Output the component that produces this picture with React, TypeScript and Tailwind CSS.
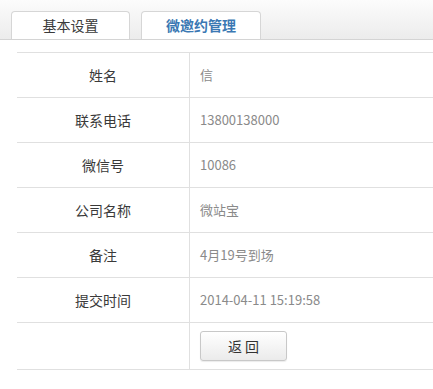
import React from 'react';

const rows: { label: string; value: string }[] = [
  { label: '姓名', value: '信' },
  { label: '联系电话', value: '13800138000' },
  { label: '微信号', value: '10086' },
  { label: '公司名称', value: '微站宝' },
  { label: '备注', value: '4月19号到场' },
  { label: '提交时间', value: '2014-04-11 15:19:58' },
];

const App: React.FC = () => {
  return (
    <div
      className="w-[433px] h-[389px] bg-white overflow-hidden"
      style={{ fontFamily: '"Noto Sans CJK SC", "Noto Sans", sans-serif' }}
    >
      <div className="h-[40px] flex items-end gap-[11px] pl-[11px] border-b border-[#d4d4d4] bg-gradient-to-b from-[#fcfcfc] to-[#ececec]">
        <div className="w-[119px] h-[28px] flex items-center justify-center bg-white border border-b-0 border-[#d6d6d6] rounded-t-[4px] text-[14px] text-[#3a3a3a]">
          基本设置
        </div>
        <div className="w-[120px] h-[28px] flex items-center justify-center bg-white border border-b-0 border-[#d6d6d6] rounded-t-[4px] text-[14px] font-bold text-[#3b78b3]">
          微邀约管理
        </div>
      </div>

      <div className="pt-[12px] pl-[17px]">
        <div className="border-t border-[#e0e0e0]">
          {rows.map((r) => (
            <div key={r.label} className="flex h-[45px] border-b border-[#e0e0e0]">
              <div className="w-[173px] shrink-0 border-r border-[#e0e0e0] flex items-center justify-center text-[14px] text-[#3a3a3a]">
                {r.label}
              </div>
              <div className="flex items-center pl-[10px] text-[13px] text-[#8a8a8a]">{r.value}</div>
            </div>
          ))}
          <div className="flex h-[47px] border-b border-[#e0e0e0]">
            <div className="w-[173px] shrink-0 border-r border-[#e0e0e0]" />
            <div className="flex items-center pl-[10px]">
              <button className="w-[87px] h-[30px] rounded-[3px] border border-[#c8c8c8] bg-gradient-to-b from-white to-[#ebebeb] text-[14px] text-[#333] shadow-[0_1px_1px_rgba(0,0,0,0.08)]">
                返 回
              </button>
            </div>
          </div>
        </div>
      </div>
    </div>
  );
};

export default App;
